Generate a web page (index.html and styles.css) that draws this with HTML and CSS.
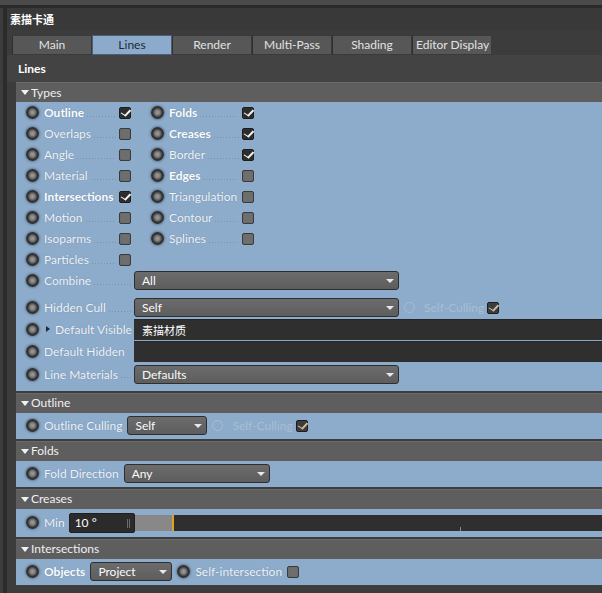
FILE: index.html
```html
<!DOCTYPE html>
<html>
<head>
<meta charset="utf-8">
<link rel="stylesheet" href="styles.css">
</head>
<body>
<div class="topstrip"></div>
<div class="topline"></div>
<div class="window">
  <div class="leftedge"></div>
  <div class="main">
    <div class="title">素描卡通</div>
    <div class="tabs">
      <div class="tab">Main</div>
      <div class="tab active">Lines</div>
      <div class="tab">Render</div>
      <div class="tab">Multi-Pass</div>
      <div class="tab">Shading</div>
      <div class="tab narrow">Editor Display</div>
    </div>
    <div class="group-title">Lines</div>
    <div class="panel">
      <div class="sec-head"><span class="tri"></span>Types</div>
      <div class="sec-body types">
        <div class="grid2">
          <div class="cell"><span class="knob"></span><span class="lbl b">Outline</span><span class="cb on"></span></div>
          <div class="cell"><span class="knob"></span><span class="lbl b">Folds</span><span class="cb on"></span></div>
          <div class="cell"><span class="knob"></span><span class="lbl">Overlaps</span><span class="cb"></span></div>
          <div class="cell"><span class="knob"></span><span class="lbl b">Creases</span><span class="cb on"></span></div>
          <div class="cell"><span class="knob"></span><span class="lbl">Angle</span><span class="cb"></span></div>
          <div class="cell"><span class="knob"></span><span class="lbl">Border</span><span class="cb on"></span></div>
          <div class="cell"><span class="knob"></span><span class="lbl">Material</span><span class="cb"></span></div>
          <div class="cell"><span class="knob"></span><span class="lbl b">Edges</span><span class="cb"></span></div>
          <div class="cell"><span class="knob"></span><span class="lbl b">Intersections</span><span class="cb on"></span></div>
          <div class="cell"><span class="knob"></span><span class="lbl nodots">Triangulation</span><span class="cb"></span></div>
          <div class="cell"><span class="knob"></span><span class="lbl">Motion</span><span class="cb"></span></div>
          <div class="cell"><span class="knob"></span><span class="lbl">Contour</span><span class="cb"></span></div>
          <div class="cell"><span class="knob"></span><span class="lbl">Isoparms</span><span class="cb"></span></div>
          <div class="cell"><span class="knob"></span><span class="lbl">Splines</span><span class="cb"></span></div>
          <div class="cell"><span class="knob"></span><span class="lbl">Particles</span><span class="cb"></span></div>
        </div>
        <div class="row"><span class="knob"></span><span class="lbl wide">Combine</span><div class="dd w265">All<span class="arr"></span></div></div>
        <div class="row gap"><span class="knob"></span><span class="lbl wide">Hidden Cull</span><div class="dd w265">Self<span class="arr"></span></div><span class="knob dis"></span><span class="distext">Self-Culling</span><span class="cb on dim"></span></div>
        <div class="row tall"><span class="knob"></span><span class="lbl wide sub"><span class="rtri"></span>Default Visible</span><div class="field">素描材质</div></div>
        <div class="row tall"><span class="knob"></span><span class="lbl wide nodots">Default Hidden</span><div class="field"></div></div>
        <div class="row tall"><span class="knob"></span><span class="lbl wide">Line Materials</span><div class="dd w265">Defaults<span class="arr"></span></div></div>
      </div>
      <div class="sec-head"><span class="tri"></span>Outline</div>
      <div class="sec-body single">
        <div class="row"><span class="knob"></span><span class="lbl plain">Outline Culling</span><div class="dd w79 ml4">Self<span class="arr"></span></div><span class="knob dis"></span><span class="distext">Self-Culling</span><span class="cb on dim"></span></div>
      </div>
      <div class="sec-head"><span class="tri"></span>Folds</div>
      <div class="sec-body single">
        <div class="row"><span class="knob"></span><span class="lbl plain">Fold Direction</span><div class="dd w146 ml4">Any<span class="arr"></span></div></div>
      </div>
      <div class="sec-head"><span class="tri"></span>Creases</div>
      <div class="sec-body single creases">
        <div class="row"><span class="knob"></span><span class="lbl plain">Min</span>
          <div class="num">10 °<span class="spin"></span></div>
          <div class="slider"><div class="fill"></div><div class="mark"></div><div class="rest"><span class="tick"></span></div></div>
        </div>
      </div>
      <div class="sec-head"><span class="tri"></span>Intersections</div>
      <div class="sec-body single">
        <div class="row"><span class="knob"></span><span class="lbl plain b">Objects</span><div class="dd w82 ml4">Project<span class="arr"></span></div><span class="knob k2"></span><span class="lbl plain">Self-intersection</span><span class="cb ml3"></span></div>
      </div>
    </div>
  </div>
</div>
</body>
</html>
```

FILE: styles.css
```css
* { box-sizing: border-box; }
html, body { margin: 0; padding: 0; }
body {
  width: 602px;
  height: 593px;
  overflow: hidden;
  background: #3c3c3c;
  font-family: Lato, "Noto Sans", "Noto Sans CJK SC", sans-serif;
  font-size: 12px;
  color: #eef2f6;
}
.topstrip { height: 5px; background: #4a4a4a; }
.topline { height: 3px; background: #2a2a2a; }
.window { display: flex; height: 585px; }
.leftedge { width: 4px; margin-left: 3px; background: #2b2b2b; }
.main { flex: 1; min-width: 0; }
.title {
  height: 22px;
  padding-left: 3px;
  line-height: 22px;
  font-weight: 700;
  color: #fff;
  font-family: "Noto Sans CJK SC", sans-serif;
  font-size: 11px;
  background: #393939;
}
.tabs { display: flex; margin-top: 5px; padding-left: 5px; height: 20px; }
.tab {
  width: 80px;
  height: 20px;
  line-height: 18px;
  text-align: center;
  background: #575757;
  border: 1px solid #3a3a3a;
  border-left-color: #2f2f2f;
  color: #e2e2e2;
}
.tab.active { background: #8cabcc; color: #1d2a38; border-color: #4d5f73; }
.tab.narrow { width: 80px; text-align: left; padding-left: 3px; }
.group-title {
  height: 27px;
  line-height: 27px;
  padding-left: 11px;
  font-weight: 700;
  color: #fff;
  background: #434343;
}
.panel { margin-left: 9px; }
.sec-head {
  height: 20px;
  line-height: 18px;
  padding-left: 5px;
  background: #5e5e5e;
  border-top: 1px solid #6a6a6a;
  color: #f0f0f0;
  display: flex;
  align-items: center;
}
.tri {
  width: 0; height: 0;
  border-left: 4px solid transparent;
  border-right: 4px solid transparent;
  border-top: 5px solid #f2f2f2;
  margin-right: 2px;
}
.sec-body {
  background: #8dabca;
  border-bottom: 2px solid #3d3d3d;
}
.sec-body.types { padding: 0 0 5px 10px; }
.sec-body.single { padding: 2px 0 2px 10px; }
.sec-body.creases { padding: 3px 0 3px 10px; }
.sec-body.single .row { height: 22px; }
.grid2 { display: grid; grid-template-columns: 125px 103px; }
.cell, .row { display: flex; align-items: center; height: 21px; }
.cell .cb { margin-right: 0; }
.grid2 .cell:nth-child(odd) { width: 105px; }
.row.gap { margin-top: 6px; }
.row.tall { height: 22.5px; }
.knob {
  flex: none;
  width: 13px; height: 13px;
  border-radius: 50%;
  background: radial-gradient(circle at 50% 50%, #9c9c9c 0, #808080 2.5px, #5a5a5a 3.6px, #323232 5px, #2a2a2a 6.5px);
  box-shadow: 0 0 2px 1px rgba(70,85,105,0.55);
  margin-right: 5px;
}
.knob.dis {
  width: 11px; height: 11px;
  margin-left: 5px;
  background: transparent;
  border: 1px solid #a9bed3;
  box-shadow: none;
}
.knob.k2 { margin-left: 5px; }
.lbl {
  flex: 1;
  display: flex;
  align-items: center;
  white-space: nowrap;
  color: #eef3f8;
  text-shadow: 0 0 1px rgba(60,80,100,0.4);
  min-width: 0;
}
.lbl::after {
  content: "";
  flex: 1;
  height: 1px;
  background: repeating-linear-gradient(to right, #7893af 0 1px, transparent 1px 3px);
  margin: 7px 3px 0 3px;
}
.lbl.nodots::after { display: none; }
.lbl.plain { flex: none; }
.lbl.plain::after { display: none; }
.lbl.b { font-weight: 700; color: #fbfdff; }
.lbl.wide { flex: none; width: 90px; }
.lbl.sub { padding-left: 2px; }
.rtri {
  width: 0; height: 0;
  border-top: 3.5px solid transparent;
  border-bottom: 3.5px solid transparent;
  border-left: 4px solid #1f2a36;
  margin-right: 5px;
}
.cb {
  flex: none;
  width: 12px; height: 12px;
  border-radius: 2px;
  background: #6e6e6e;
  border: 1px solid #3b3b3b;
  box-shadow: inset 0 0 1px #555;
  position: relative;
}
.cb.on { background: #2c2c2c; border-color: #1c1c1c; }
.cb.on::after {
  content: "";
  position: absolute;
  left: 3px; top: 0px;
  width: 4px; height: 7px;
  border-right: 2px solid #f2f2f2;
  border-bottom: 1.5px solid #f2f2f2;
  transform: rotate(32deg) skewX(-12deg);
}
.cb.dim { margin-left: 0; background: #3c3c3c; }
.cb.dim::after { border-color: #c9b89c; }
.cb.ml3 { margin-left: 5px; }
.dd {
  flex: none;
  position: relative;
  height: 19px;
  line-height: 17px;
  padding-left: 7px;
  border: 1px solid #2e2e2e;
  border-radius: 3px;
  background: linear-gradient(#6c6c6c, #5d5d5d);
  color: #fafafa;
}
.dd.w265 { width: 265px; }
.dd.w79 { width: 80px; }
.dd.w146 { width: 146px; }
.dd.w82 { width: 82px; }
.dd.ml4 { margin-left: 5px; }
.arr {
  position: absolute;
  right: 4px; top: 7px;
  width: 0; height: 0;
  border-left: 4px solid transparent;
  border-right: 4px solid transparent;
  border-top: 4px solid #e8e8e8;
}
.distext { flex: none; color: #a9bed3; margin-left: 4px; margin-right: 3px; }
.field {
  flex: 1;
  height: 21px;
  line-height: 20px;
  padding-left: 8px;
  background: #2f2f2f;
  border-top: 1px solid #232323;
  color: #fff;
  font-family: "Noto Sans CJK SC", sans-serif;
  font-size: 11px;
}
.num {
  flex: none;
  position: relative;
  margin-left: 4px;
  width: 66px;
  height: 20px;
  line-height: 18px;
  padding-left: 5px;
  background: #2b2b2b;
  border: 1px solid #1f1f1f;
  border-radius: 2px;
  color: #fff;
}
.spin {
  position: absolute;
  right: 4px; top: 5px;
  width: 3px; height: 9px;
  border-left: 1px solid #888;
  border-right: 1px solid #888;
  opacity: 0.7;
}
.slider { flex: 1; display: flex; height: 16px; }
.fill { width: 37px; background: #888; }
.mark { width: 2px; background: #e0a31c; }
.rest { flex: 1; background: #2f2f2f; position: relative; }
.tick {
  position: absolute;
  left: 286px; bottom: 0;
  width: 1px; height: 4px;
  background: #888;
}
```
